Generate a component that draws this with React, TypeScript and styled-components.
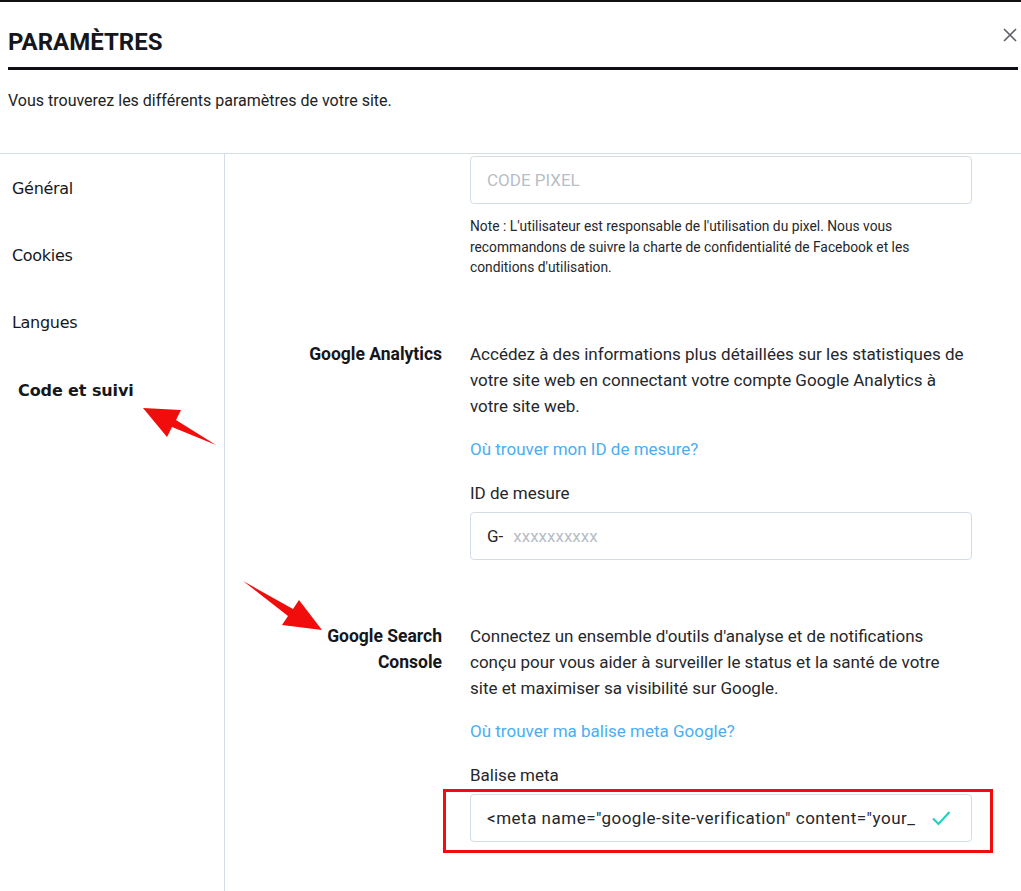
import React from 'react'
import styled, { createGlobalStyle } from 'styled-components'

const GlobalStyle = createGlobalStyle`
  html, body {
    margin: 0;
    padding: 0;
    background: #fff;
  }
  body {
    font-family: Roboto, "Liberation Sans", sans-serif;
    color: #1d1f23;
  }
`

const Modal = styled.div`
  position: relative;
  width: 1021px;
  height: 891px;
  overflow: hidden;
  border-top: 2px solid #111;
  box-sizing: border-box;
`

const Header = styled.header`
  padding: 26px 3px 0 8px;
`

const TitleRow = styled.div`
  display: flex;
  align-items: center;
  justify-content: space-between;
  padding-bottom: 11px;
  border-bottom: 3px solid #0d0f14;
`

const Title = styled.h1`
  margin: 0;
  font-size: 24px;
  line-height: 28px;
  font-weight: 700;
  color: #15171c;
`

const CloseButton = styled.button`
  display: flex;
  border: 0;
  padding: 0;
  background: none;
  cursor: pointer;
  margin-top: -14px;
`

const Subtitle = styled.p`
  margin: 21px 0 0;
  font-size: 16px;
  line-height: 20px;
  color: #222;
`

const Body = styled.div`
  display: flex;
  margin-top: 42px;
  border-top: 1px solid #d5dee7;
  height: 100%;
`

const Sidebar = styled.nav`
  width: 224px;
  flex-shrink: 0;
  border-right: 1px solid #d5dee7;
  padding-top: 24px;
  display: flex;
  flex-direction: column;
  gap: 45px;
  font-family: "DejaVu Sans", Verdana, sans-serif;
`

const NavItem = styled.a<{ active?: boolean }>`
  display: block;
  font-size: 16px;
  line-height: 22px;
  font-weight: ${({ active }) => (active ? 700 : 400)};
  padding-left: ${({ active }) => (active ? 18 : 12)}px;
  margin-top: ${({ active }) => (active ? 1 : 0)}px;
  color: #15171c;
  letter-spacing: ${({ active }) => (active ? -0.1 : -0.3)}px;
  cursor: pointer;
`

const Content = styled.main`
  flex: 1;
  padding: 2px 49px 0 0;
`

const Row = styled.section<{ gapTop?: number }>`
  display: grid;
  grid-template-columns: 1fr 502px;
  column-gap: 28px;
  margin-top: ${({ gapTop }) => gapTop ?? 0}px;
`

const RowLabel = styled.h3`
  margin: 0;
  text-align: right;
  font-size: 17.5px;
  line-height: 26px;
  font-weight: 700;
  color: #15171c;
`

const Column = styled.div`
  display: flex;
  flex-direction: column;
`

const Text = styled.p`
  margin: 0;
  font-size: 17px;
  line-height: 26px;
  color: #25272b;
`

const Note = styled.p`
  margin: 12px 0 0;
  font-size: 13.8px;
  line-height: 20.5px;
  color: #25272b;
`

const HelpLink = styled.a`
  margin-top: 17px;
  font-size: 17px;
  line-height: 26px;
  color: #4aaef2;
  text-decoration: none;
  cursor: pointer;
`

const FieldLabel = styled.label`
  margin-top: 18px;
  font-size: 17px;
  line-height: 26px;
  color: #25272b;
`

const Field = styled.div<{ spaced?: boolean }>`
  position: relative;
  display: flex;
  align-items: center;
  box-sizing: border-box;
  height: 48px;
  margin-top: ${({ spaced }) => (spaced ? 6 : 0)}px;
  padding: 0 20px 0 16px;
  border: 1px solid #d4dde6;
  border-radius: 4px;
  background: #fff;
  font-size: 17px;
  color: #25272b;
`

const Input = styled.input`
  flex: 1;
  min-width: 0;
  border: 0;
  outline: none;
  padding: 0;
  font: inherit;
  color: inherit;
  background: transparent;

  &::placeholder {
    color: #b7bec6;
  }
`

const Prefix = styled.span`
  margin-right: 10px;
`

const MetaValue = styled.span`
  flex: 1;
  white-space: nowrap;
  overflow: hidden;
  letter-spacing: 0.5px;
`

const CheckMark = styled.svg`
  flex-shrink: 0;
  margin-left: 12px;
`

/* red annotation frame around the meta tag field */
const Highlight = styled.div`
  position: absolute;
  left: -28px;
  right: -22px;
  top: -6px;
  bottom: -12px;
  border: 3px solid #f20d0d;
  pointer-events: none;
`

const Arrows = styled.svg`
  position: absolute;
  top: 0;
  left: 0;
  pointer-events: none;
`

export default function App() {
  return (
    <Modal>
      <GlobalStyle />
      <Header>
        <TitleRow>
          <Title>PARAMÈTRES</Title>
          <CloseButton aria-label="Fermer">
            <svg width="16" height="16" viewBox="0 0 16 16">
              <path d="M2 2 L14 14 M14 2 L2 14" stroke="#5f6368" strokeWidth="1.7" />
            </svg>
          </CloseButton>
        </TitleRow>
        <Subtitle>Vous trouverez les différents paramètres de votre site.</Subtitle>
      </Header>

      <Body>
        <Sidebar>
          <NavItem>Général</NavItem>
          <NavItem>Cookies</NavItem>
          <NavItem>Langues</NavItem>
          <NavItem active>Code et suivi</NavItem>
        </Sidebar>

        <Content>
          <Row>
            <div />
            <Column>
              <Field>
                <Input placeholder="CODE PIXEL" />
              </Field>
              <Note>
                Note : L'utilisateur est responsable de l'utilisation du pixel. Nous vous
                recommandons de suivre la charte de confidentialité de Facebook et les
                conditions d'utilisation.
              </Note>
            </Column>
          </Row>

          <Row gapTop={63}>
            <RowLabel>Google Analytics</RowLabel>
            <Column>
              <Text>
                Accédez à des informations plus détaillées sur les statistiques de votre
                site web en connectant votre compte Google Analytics à votre site web.
              </Text>
              <HelpLink>Où trouver mon ID de mesure?</HelpLink>
              <FieldLabel>ID de mesure</FieldLabel>
              <Field spaced>
                <Prefix>G-</Prefix>
                <Input placeholder="xxxxxxxxxx" />
              </Field>
            </Column>
          </Row>

          <Row gapTop={63}>
            <RowLabel>
              Google Search
              <br />
              Console
            </RowLabel>
            <Column>
              <Text>
                Connectez un ensemble d'outils d'analyse et de notifications conçu pour
                vous aider à surveiller le status et la santé de votre
                <br />
                site et maximiser sa visibilité sur Google.
              </Text>
              <HelpLink>Où trouver ma balise meta Google?</HelpLink>
              <FieldLabel>Balise meta</FieldLabel>
              <Field spaced>
                <MetaValue>{'<meta name="google-site-verification" content="your_'}</MetaValue>
                <CheckMark width="20" height="16" viewBox="0 0 20 16">
                  <path d="M2 8.5 L7.5 14 L18.5 2" fill="none" stroke="#26d0c0" strokeWidth="2.2" />
                </CheckMark>
                <Highlight />
              </Field>
            </Column>
          </Row>
        </Content>
      </Body>

      <Arrows width="1021" height="891">
        <polygon
          points="143,406 181,408 176,418 216,443 172,425 167,435"
          fill="#f20d0d"
        />
        <polygon
          points="322,628 299,598 293,607 243,579 288,614 282,623"
          fill="#f20d0d"
        />
      </Arrows>
    </Modal>
  )
}
